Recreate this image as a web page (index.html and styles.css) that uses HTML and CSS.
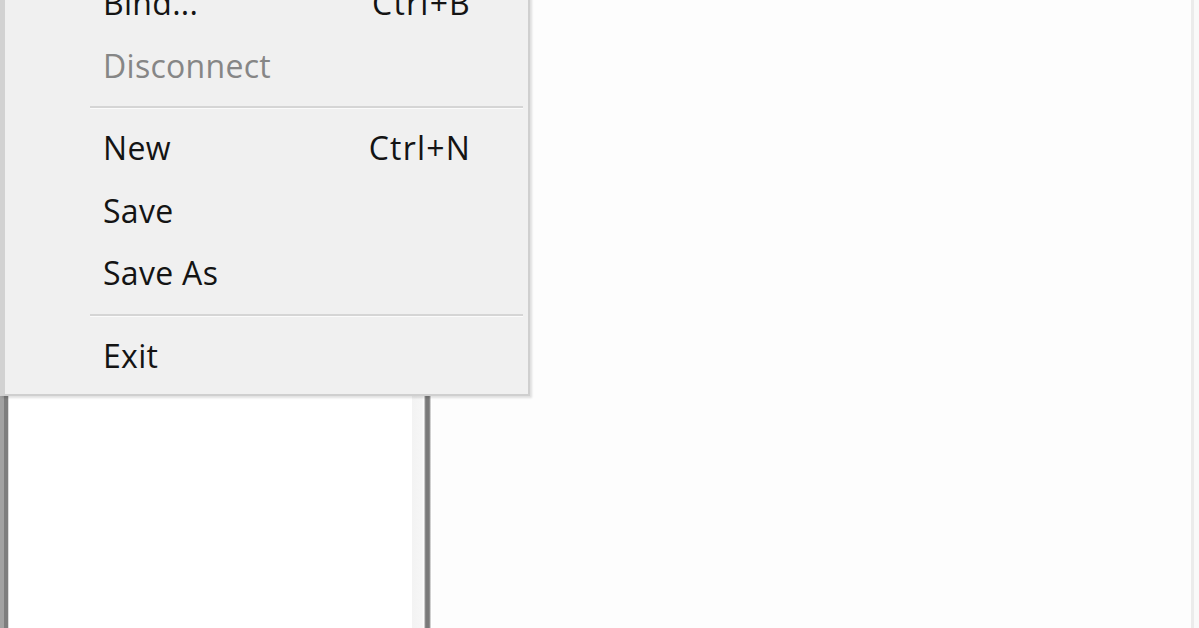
FILE: index.html
```html
<!DOCTYPE html>
<html>
<head>
<meta charset="utf-8">
<link rel="stylesheet" href="styles.css">
</head>
<body>
<div class="window">
  <div class="frame-left"></div>
  <div class="pane-left"></div>
  <div class="splitter"></div>
  <div class="pane-right"></div>
  <div class="frame-right"></div>

  <div class="menu">
    <div class="item"><span class="label">Bind...</span><span class="key">Ctrl+B</span></div>
    <div class="item disabled"><span class="label">Disconnect</span><span class="key"></span></div>
    <div class="sep"></div>
    <div class="item"><span class="label">New</span><span class="key">Ctrl+N</span></div>
    <div class="item"><span class="label">Save</span><span class="key"></span></div>
    <div class="item"><span class="label">Save As</span><span class="key"></span></div>
    <div class="sep"></div>
    <div class="item"><span class="label">Exit</span><span class="key"></span></div>
  </div>
</div>
</body>
</html>
```

FILE: styles.css
```css
html, body {
  margin: 0;
  padding: 0;
  background: #ffffff;
  overflow: hidden;
}

.window {
  position: relative;
  display: flex;
  width: 1199px;
  height: 628px;
  background: #ffffff;
}

.frame-left {
  width: 9px;
  flex: none;
  background: linear-gradient(to right, #a2a2a2 0, #a2a2a2 4px, #7e7e7e 4px, #7e7e7e 8px, #dcdcdc 8px, #dcdcdc 9px);
}

.pane-left {
  width: 403px;
  flex: none;
  background: #ffffff;
}

.splitter {
  width: 20px;
  flex: none;
  background: linear-gradient(to right, #f3f3f3 0, #f6f6f6 10px, #ffffff 12px, #9a9a9a 13px, #7a7a7a 14px, #7a7a7a 17px, #a0a0a0 18px, #ffffff 19px);
}

.pane-right {
  flex: 1;
  background: #fdfdfd;
}

.frame-right {
  width: 8px;
  flex: none;
  background: linear-gradient(to right, #ebebeb 0, #ebebeb 3px, #f9f9f9 3px);
}

.menu {
  position: absolute;
  left: 0;
  top: -36px;
  width: 523px;
  padding: 8px 0 7px 0;
  background: #f0f0f0;
  border-left: 5px solid #d2d2d2;
  border-right: 2px solid #cfcfcf;
  border-bottom: 2px solid #cfcfcf;
  box-shadow: 2px 2px 2px rgba(0, 0, 0, 0.12);
  font-family: "Open Sans", "Noto Sans", sans-serif;
  font-size: 32px;
  letter-spacing: 0.3px;
  color: #141414;
}

.item {
  display: flex;
  align-items: center;
  justify-content: space-between;
  height: 62.5px;
  padding: 0 57px 0 98px;
}

.item .label {
  line-height: 1;
}

.item .key {
  line-height: 1;
  letter-spacing: 1.2px;
}

.item.disabled {
  color: #868686;
}

.sep {
  height: 20px;
  margin: 0 5px 0 85px;
  background: linear-gradient(to bottom, transparent 9px, #d5d5d5 9px, #d5d5d5 11px, #fbfbfb 11px, #fbfbfb 12px, transparent 12px);
}
```
